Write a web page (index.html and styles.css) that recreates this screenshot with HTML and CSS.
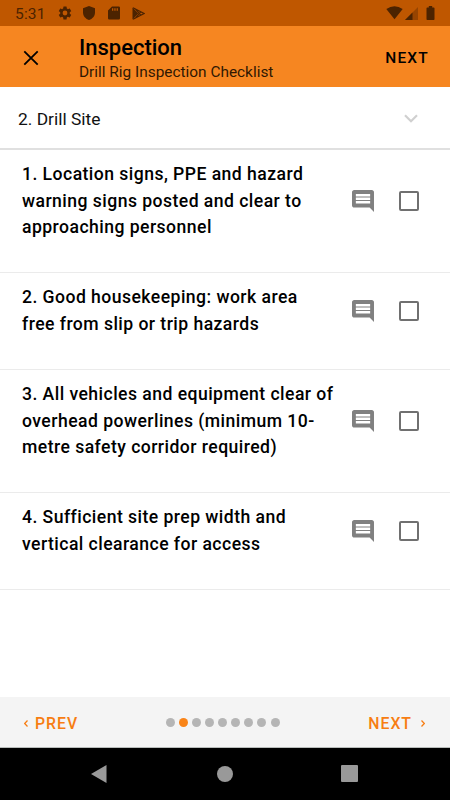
FILE: index.html
```
<!DOCTYPE html>
<html lang="en">
  <head>
    <meta charset="UTF-8" />
    <meta name="viewport" content="width=device-width, initial-scale=1.0" />
    <title>Inspection</title>
    <link rel="stylesheet" href="styles.css">
  </head>
  <body>
    <!-- Status bar -->
    <div class="status-bar">
      <span class="time">5:31</span>
      <svg class="gear" viewBox="0 0 24 24"><path d="M19.14 12.94c.04-.3.06-.61.06-.94s-.02-.64-.07-.94l2.03-1.58a.49.49 0 0 0 .12-.61l-1.92-3.32a.49.49 0 0 0-.59-.22l-2.39.96a7 7 0 0 0-1.62-.94l-.36-2.54a.48.48 0 0 0-.48-.41h-3.84a.47.47 0 0 0-.47.41l-.36 2.54c-.59.24-1.13.57-1.62.94l-2.39-.96a.48.48 0 0 0-.59.22L2.74 8.87a.47.47 0 0 0 .12.61l2.03 1.58c-.05.3-.09.63-.09.94s.02.64.07.94l-2.03 1.58a.49.49 0 0 0-.12.61l1.92 3.32c.12.22.37.29.59.22l2.39-.96c.5.38 1.03.7 1.62.94l.36 2.54c.05.24.24.41.48.41h3.84c.24 0 .44-.17.47-.41l.36-2.54a7 7 0 0 0 1.62-.94l2.39.96c.22.08.47 0 .59-.22l1.92-3.32a.47.47 0 0 0-.12-.61zM12 15.6a3.6 3.6 0 1 1 0-7.2 3.6 3.6 0 0 1 0 7.2z" /></svg>
      <svg class="shield" viewBox="0 0 12 14"><path d="M6 0 12 2.2V6.5C12 10 9.4 13 6 14 2.6 13 0 10 0 6.5V2.2z" /></svg>
      <svg class="sdcard" viewBox="0 0 12 14"><path fill-rule="evenodd" d="M4 .5H10.7Q12 .5 12 1.8V12.2Q12 13.5 10.7 13.5H1.3Q0 13.5 0 12.2V4.5zM4 2.2V4.7H5.3V2.2zM6.3 2.2V4.7H7.6V2.2zM8.6 2.2V4.7H9.9V2.2z" /></svg>
      <svg class="play" viewBox="0 0 13 13"><path d="M.5.6 6.3 6.5.5 12.4z" /><path class="play-outline" d="M1 .8 12 6.5 1 12.2M3.5 2.1 8.8 8.1M3.5 10.9 8.8 4.9" /></svg>
      <div class="signals">
        <svg class="wifi" viewBox="0 0 17 14"><path d="M.3 3Q8.5-2.6 16.7 3L8.5 13.2z" /></svg>
        <svg class="cell" viewBox="0 0 13 13"><path opacity=".35" d="M13 0V13H0z" /><path d="M7.5 5.5V13H0z" /></svg>
        <svg class="battery" viewBox="0 0 8 14"><path d="M2.3 0H5.7V1.4H7.2Q8 1.4 8 2.2V13.2Q8 14 7.2 14H.8Q0 14 0 13.2V2.2Q0 1.4.8 1.4H2.3z" /></svg>
      </div>
    </div>

    <!-- App bar -->
    <header class="app-bar">
      <svg class="close" viewBox="0 0 16 16"><path d="M1.3 1.3 14.7 14.7M14.7 1.3 1.3 14.7" /></svg>
      <div class="titles">
        <h1>Inspection</h1>
        <p>Drill Rig Inspection Checklist</p>
      </div>
      <span class="app-next">NEXT</span>
    </header>

    <!-- Section picker -->
    <div class="section-select">
      <span>2. Drill Site</span>
      <svg class="chevron" viewBox="0 0 14 9"><path d="M1 1.2 7 7.2 13 1.2" /></svg>
    </div>

    <!-- Checklist -->
    <ul class="checklist">
      <li class="item">
        <p>1. Location signs, PPE and hazard<br />warning signs posted and clear to<br />approaching personnel</p>
        <svg class="comment" viewBox="2 2 20 20"><path d="M21.99 4c0-1.1-.89-2-1.99-2H4c-1.1 0-2 .9-2 2v12c0 1.1.9 2 2 2h14l4 4zM18.5 14.3h-13v-2.3h13zm0-3.2h-13V8.8h13zm0-3.2h-13V5.6h13z" /></svg>
        <span class="checkbox"></span>
      </li>
      <li class="item">
        <p>2. Good housekeeping: work area<br />free from slip or trip hazards</p>
        <svg class="comment" viewBox="2 2 20 20"><path d="M21.99 4c0-1.1-.89-2-1.99-2H4c-1.1 0-2 .9-2 2v12c0 1.1.9 2 2 2h14l4 4zM18.5 14.3h-13v-2.3h13zm0-3.2h-13V8.8h13zm0-3.2h-13V5.6h13z" /></svg>
        <span class="checkbox"></span>
      </li>
      <li class="item">
        <p>3. All vehicles and equipment clear of<br />overhead powerlines (minimum 10-<br />metre safety corridor required)</p>
        <svg class="comment" viewBox="2 2 20 20"><path d="M21.99 4c0-1.1-.89-2-1.99-2H4c-1.1 0-2 .9-2 2v12c0 1.1.9 2 2 2h14l4 4zM18.5 14.3h-13v-2.3h13zm0-3.2h-13V8.8h13zm0-3.2h-13V5.6h13z" /></svg>
        <span class="checkbox"></span>
      </li>
      <li class="item">
        <p>4. Sufficient site prep width and<br />vertical clearance for access</p>
        <svg class="comment" viewBox="2 2 20 20"><path d="M21.99 4c0-1.1-.89-2-1.99-2H4c-1.1 0-2 .9-2 2v12c0 1.1.9 2 2 2h14l4 4zM18.5 14.3h-13v-2.3h13zm0-3.2h-13V8.8h13zm0-3.2h-13V5.6h13z" /></svg>
        <span class="checkbox"></span>
      </li>
    </ul>

    <!-- Pager -->
    <footer class="pager">
      <div class="page-link prev">
        <svg class="arrow" viewBox="0 0 4 7"><path d="M3.5.5.7 3.5 3.5 6.5" /></svg>
        <span>PREV</span>
      </div>
      <div class="dots">
        <i></i><i class="active"></i><i></i><i></i><i></i><i></i><i></i><i></i><i></i>
      </div>
      <div class="page-link next">
        <span>NEXT</span>
        <svg class="arrow" viewBox="0 0 4 7"><path d="M.5.5 3.3 3.5.5 6.5" /></svg>
      </div>
    </footer>

    <!-- Android navigation -->
    <nav class="android-nav">
      <svg class="nav-back" viewBox="0 0 16 18"><path d="M15.5 0V18L0 9z" /></svg>
      <span class="nav-home"></span>
      <span class="nav-recent"></span>
    </nav>
  </body>
</html>
```
FILE: styles.css
```
* {
  box-sizing: border-box;
}
body {
  margin: 0;
  height: 800px;
  display: flex;
  flex-direction: column;
  font-family: Roboto, sans-serif;
  background-color: #fff;
  color: #000;
  overflow: hidden;
}
h1,
p,
ul {
  margin: 0;
  padding: 0;
}
svg {
  display: block;
  flex: none;
}
.status-bar {
  height: 26px;
  display: flex;
  align-items: center;
  padding: 0 15px 0 15px;
  background-color: #bf5700;
  color: #4c2300;
  fill: #4c2300;
}
.time {
  width: 42px;
  padding-top: 1px;
  font-size: 15.5px;
  line-height: 20px;
  letter-spacing: 0.2px;
}
.gear {
  width: 16px;
  height: 16px;
  margin-right: 10px;
}
.shield {
  width: 12px;
  height: 14px;
  margin-right: 13px;
}
.sdcard {
  width: 12px;
  height: 14px;
  margin-right: 12px;
}
.play {
  width: 13px;
  height: 13px;
}
.play-outline {
  fill: none;
  stroke: #4c2300;
  stroke-width: 1.2;
}
.signals {
  display: flex;
  align-items: center;
  margin-left: auto;
}
.wifi {
  width: 17px;
  height: 14px;
  margin-right: 2px;
}
.cell {
  width: 13px;
  height: 13px;
  margin-right: 8px;
}
.battery {
  width: 9px;
  height: 14px;
}
.app-bar {
  height: 61px;
  display: flex;
  align-items: center;
  padding: 0 21px 0 23px;
  background-color: #f68621;
}
.close {
  width: 16px;
  height: 16px;
  margin: 2px 40px 0 0;
  fill: none;
  stroke: #000;
  stroke-width: 1.8;
}
.titles {
  padding-top: 5px;
}
.titles h1 {
  font-size: 22px;
  font-weight: 500;
  line-height: 26px;
}
.titles p {
  font-size: 15.4px;
  line-height: 23px;
  color: #301803;
}
.app-next {
  margin: 3px 0 0 auto;
  font-size: 15.5px;
  font-weight: 500;
  letter-spacing: 1.2px;
}
.section-select {
  height: 63px;
  display: flex;
  align-items: center;
  justify-content: space-between;
  padding: 2px 32px 0 18px;
  border-bottom: 2px solid #e0e0e0;
  font-size: 17.4px;
  color: #111;
}
.chevron {
  width: 14px;
  height: 9px;
  fill: none;
  stroke: #d0d0d0;
  stroke-width: 2.2;
}
.checklist {
  flex: 1;
  list-style: none;
}
.item {
  display: flex;
  align-items: center;
  padding: 11.4px 31px 31.8px 22px;
  border-bottom: 1px solid #ebebeb;
}
.item p {
  flex: 1;
  white-space: nowrap;
  font-size: 17.6px;
  font-weight: 500;
  line-height: 26.3px;
  letter-spacing: 0.45px;
}
.comment {
  width: 22px;
  height: 22px;
  margin-right: 25px;
  fill: #808080;
}
.checkbox {
  flex: none;
  width: 20px;
  height: 20px;
  border: 2px solid #707070;
  border-radius: 2px;
}
.pager {
  height: 51px;
  display: flex;
  align-items: center;
  justify-content: space-between;
  padding: 2px 25px 0 24px;
  background-color: #f4f4f4;
  border-bottom: 1px solid #b8bcba;
}
.page-link {
  display: flex;
  align-items: center;
  font-size: 15.8px;
  font-weight: 500;
  letter-spacing: 1px;
  color: #f77d12;
}
.arrow {
  width: 4px;
  height: 7px;
  margin-top: 1px;
  fill: none;
  stroke: #f77d12;
  stroke-width: 1.2;
}
.prev {
  gap: 7px;
}
.next {
  gap: 9px;
}
.dots {
  display: flex;
  gap: 4.1px;
  margin: 0 1px 1px 0;
}
.dots i {
  width: 9px;
  height: 9px;
  border-radius: 50%;
  background-color: #b5b5b5;
}
.dots .active {
  background-color: #f98418;
}
.android-nav {
  height: 52px;
  display: flex;
  align-items: center;
  justify-content: space-between;
  padding: 0 92px 1px 91px;
  background-color: #000;
}
.nav-back {
  width: 16px;
  height: 18px;
  fill: #999;
}
.nav-home {
  width: 16px;
  height: 16px;
  margin-left: 1px;
  border-radius: 50%;
  background-color: #999;
}
.nav-recent {
  width: 17px;
  height: 17px;
  border-radius: 1px;
  background-color: #999;
}
```
